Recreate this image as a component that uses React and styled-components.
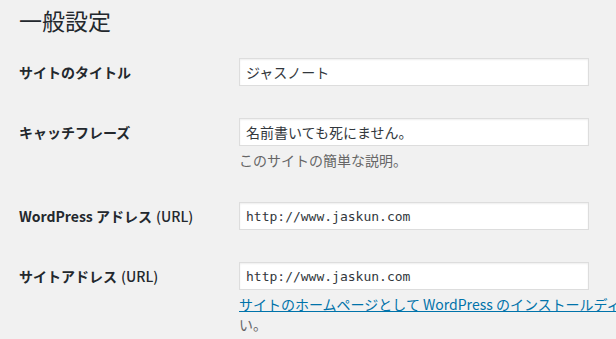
import React from 'react'
import styled, { createGlobalStyle } from 'styled-components';

const GlobalStyle = createGlobalStyle`
    body {
        margin: 0;
        background-color: #f1f1f1;
        overflow: hidden;
        font-family: "Noto Sans CJK JP", "Noto Sans", sans-serif;
        color: #23282d;
    }
`

export default function App() {
    return (
        <Wrap>
            <GlobalStyle />
            <Title>一般設定</Title>
            <Form>
                <Row>
                    <Label>サイトのタイトル</Label>
                    <Field>
                        <TextInput defaultValue="ジャスノート" />
                    </Field>
                </Row>
                <Row>
                    <Label>キャッチフレーズ</Label>
                    <Field>
                        <TextInput defaultValue="名前書いても死にません。" />
                        <Description>このサイトの簡単な説明。</Description>
                    </Field>
                </Row>
                <Row>
                    <Label>WordPress アドレス <Paren>(URL)</Paren></Label>
                    <Field>
                        <TextInput mono defaultValue="http://www.jaskun.com" />
                    </Field>
                </Row>
                <Row>
                    <Label>サイトアドレス <Paren>(URL)</Paren></Label>
                    <Field>
                        <TextInput mono defaultValue="http://www.jaskun.com" />
                        <Description>
                            <Line>
                                <Link href="#">サイトのホームページとして WordPress のインストールディレクトリとは異なる場所を設定する場合は、ここにアドレスを入力してくださ</Link>
                            </Line>
                            い。
                        </Description>
                    </Field>
                </Row>
            </Form>
        </Wrap>
    )
}

const Wrap = styled.div`
    padding-left: 19px;
`
const Title = styled.h1`
    margin: 0;
    padding-top: 6px;
    font-size: 23px;
    line-height: 28px;
    font-weight: 400;
    color: #23282d;
`
const Form = styled.div`
    margin-top: 8px;
    display: flex;
    flex-direction: column;
`
const Row = styled.div`
    display: flex;
    padding: 16px 0;
`
const Label = styled.div`
    width: 220px;
    flex-shrink: 0;
    height: 28px;
    display: flex;
    align-items: center;
    gap: 4px;
    font-size: 14px;
    font-weight: 700;
    color: #23282d;
    white-space: nowrap;
`
const Paren = styled.span`
    font-weight: 500;
`
const Field = styled.div`
    display: flex;
    flex-direction: column;
`
const TextInput = styled.input`
    width: 350px;
    height: 28px;
    box-sizing: border-box;
    margin: 0;
    padding: 0 6px;
    border: 1px solid #ddd;
    background-color: #fff;
    box-shadow: inset 0 1px 2px rgba(0,0,0,.07);
    color: #32373c;
    outline: none;
    font-family: ${p => p.mono ? '"DejaVu Sans Mono", "Liberation Mono", monospace' : '"Noto Sans CJK JP", "Noto Sans", sans-serif'};
    font-size: ${p => p.mono ? '13px' : '14px'};
`
const Description = styled.div`
    margin-top: 4px;
    font-size: 14px;
    line-height: 20px;
    color: #666;
`
const Line = styled.div`
    white-space: nowrap;
`
const Link = styled.a`
    color: #0073aa;
    text-decoration: underline;
`
